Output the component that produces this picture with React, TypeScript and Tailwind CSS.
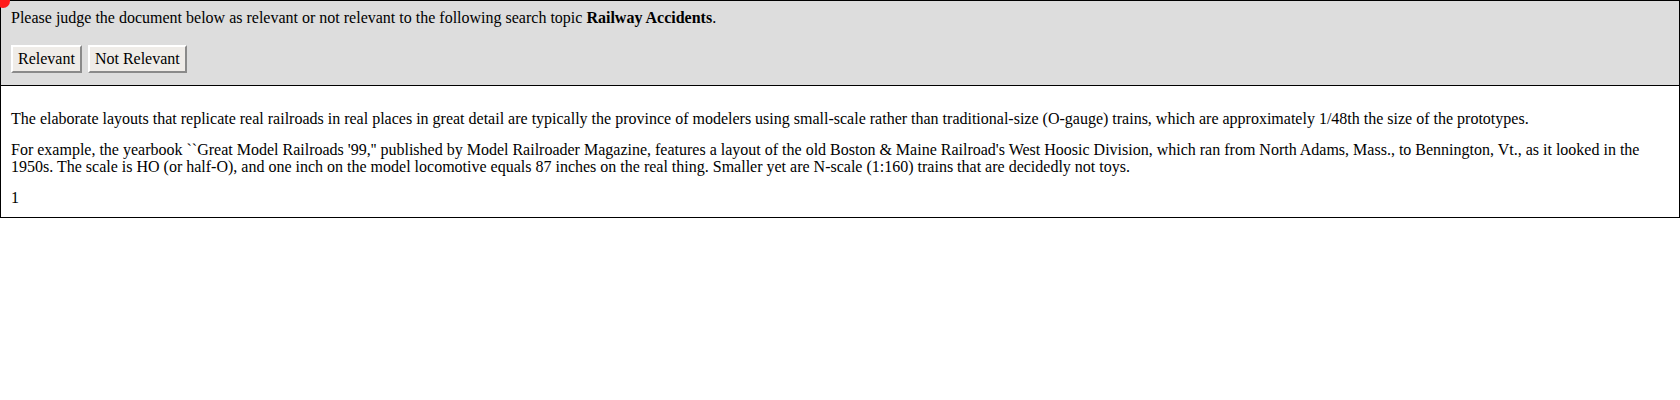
import React from 'react';

const serif = { fontFamily: '"Liberation Serif", "Times New Roman", serif' };

const JudgeButton: React.FC<{ label: string }> = ({ label }) => (
    <button
        className="h-[28px] px-[5px] bg-[#efece8] border-2 border-t-white border-l-white border-r-[#8a8a8a] border-b-[#8a8a8a] text-[16px] leading-[18px] text-black"
        style={serif}
    >
        {label}
    </button>
);

export default function App() {
    return (
        <div className="relative w-[1680px] min-h-[400px] bg-white text-black text-[16px]" style={serif}>
            <div className="absolute -left-[4px] -top-[6px] h-[14px] w-[14px] rounded-full bg-[#ff1a1a]"></div>

            <div className="bg-[#dddddd] border border-black px-[10px] pt-[8px] pb-[12px]">
                <div className="leading-[18px]">
                    Please judge the document below as relevant or not relevant to the following search topic <b>Railway Accidents</b>.
                </div>
                <div className="mt-[18px] flex gap-[6px]">
                    <JudgeButton label="Relevant" />
                    <JudgeButton label="Not Relevant" />
                </div>
            </div>

            <div className="border-x border-b border-black px-[10px] pt-[10px] pb-[11px] leading-[17px]">
                <p className="mt-[14px]">
                    The elaborate layouts that replicate real railroads in real places in great detail are typically the province of modelers using small-scale rather than traditional-size (O-gauge) trains, which are approximately 1/48th the size of the prototypes.
                </p>
                <p className="mt-[14px]">
                    For example, the yearbook ``Great Model Railroads '99,'' published by Model Railroader Magazine, features a layout of the old Boston &amp; Maine Railroad's West Hoosic Division, which ran from North Adams, Mass., to Bennington, Vt., as it looked in the 1950s. The scale is HO (or half-O), and one inch on the model locomotive equals 87 inches on the real thing. Smaller yet are N-scale (1:160) trains that are decidedly not toys.
                </p>
                <div className="mt-[14px]">1</div>
            </div>
        </div>
    );
}
